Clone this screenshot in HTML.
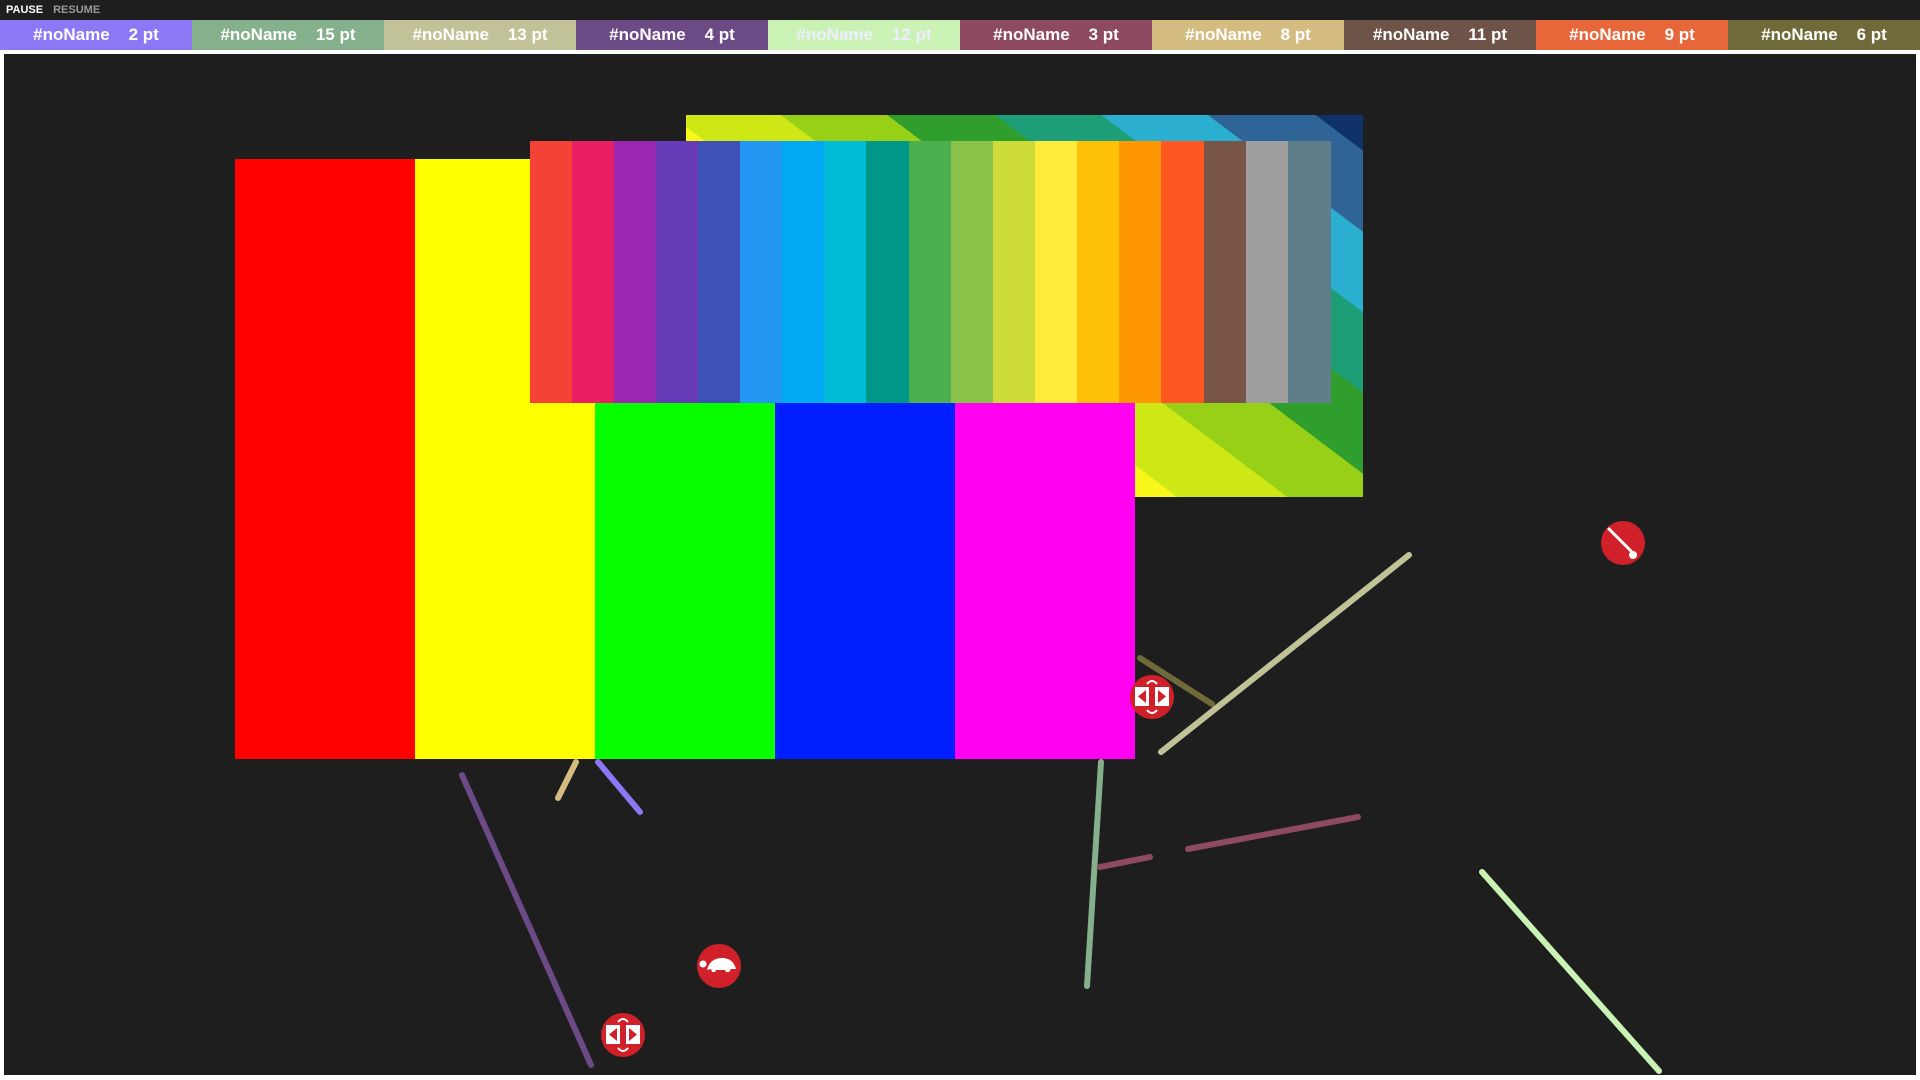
<!DOCTYPE html>
<html><head><meta charset="utf-8"><style>
*{margin:0;padding:0;box-sizing:border-box}
body{width:1920px;height:1080px;background:#fff;overflow:hidden;font-family:"Liberation Sans",sans-serif}
#top{position:absolute;left:0;top:0;width:1920px;height:20px;background:#1e1e1e;font-size:11px;font-weight:bold;line-height:20px;padding-left:6px}
#top span{margin-right:10px}
#tabs{position:absolute;left:0;top:20px;width:1920px;height:30px;display:flex}
#tabs div{flex:1;color:#fff;font-weight:bold;font-size:17px;line-height:30px;text-align:center;white-space:pre}
svg{position:absolute;left:0;top:0}
</style></head><body>
<div id="top"><span style="color:#fff">PAUSE</span><span style="color:#999">RESUME</span></div>
<div id="tabs">
<div style="background:#8c78f4">#noName    2 pt</div>
<div style="background:#85b08c">#noName    15 pt</div>
<div style="background:#c2c298">#noName    13 pt</div>
<div style="background:#6c4a86">#noName    4 pt</div>
<div style="background:#caf2b4;color:#eef">#noName    12 pt</div>
<div style="background:#8e4a60">#noName    3 pt</div>
<div style="background:#d4bc80">#noName    8 pt</div>
<div style="background:#6e5348">#noName    11 pt</div>
<div style="background:#e8673a">#noName    9 pt</div>
<div style="background:#6e6a3a">#noName    6 pt</div>
</div>
<svg width="1920" height="1080">
<defs>
<linearGradient id="dg" gradientUnits="userSpaceOnUse" x1="686" y1="497" x2="1115" y2="-72">
<stop offset="0" stop-color="#f9f71a"/><stop offset=".415" stop-color="#f9f71a"/>
<stop offset=".415" stop-color="#cde815"/><stop offset=".508" stop-color="#cde815"/>
<stop offset=".508" stop-color="#98d018"/><stop offset=".598" stop-color="#98d018"/>
<stop offset=".598" stop-color="#2f9e2c"/><stop offset=".689" stop-color="#2f9e2c"/>
<stop offset=".689" stop-color="#1e9e76"/><stop offset=".779" stop-color="#1e9e76"/>
<stop offset=".779" stop-color="#2aafd0"/><stop offset=".869" stop-color="#2aafd0"/>
<stop offset=".869" stop-color="#2e6496"/><stop offset=".96" stop-color="#2e6496"/>
<stop offset=".96" stop-color="#0f3368"/><stop offset="1" stop-color="#0f3368"/>
</linearGradient>
</defs>
<rect x="4" y="54" width="1912" height="1021" fill="#1e1e1e"/>
<rect x="686" y="115" width="677" height="382" fill="url(#dg)"/>
<rect x="235" y="159" width="180" height="600" fill="#ff0000"/>
<rect x="415" y="159" width="180" height="600" fill="#ffff00"/>
<rect x="595" y="159" width="180" height="600" fill="#08ff00"/>
<rect x="775" y="159" width="180" height="600" fill="#001eff"/>
<rect x="955" y="159" width="180" height="600" fill="#ff00f0"/>
<g>
<rect x="530" y="141" width="43" height="262" fill="#F44336"/>
<rect x="572" y="141" width="43" height="262" fill="#E91E63"/>
<rect x="614" y="141" width="43" height="262" fill="#9C27B0"/>
<rect x="656" y="141" width="43" height="262" fill="#673AB7"/>
<rect x="698" y="141" width="43" height="262" fill="#3F51B5"/>
<rect x="740" y="141" width="43" height="262" fill="#2196F3"/>
<rect x="782" y="141" width="43" height="262" fill="#03A9F4"/>
<rect x="824" y="141" width="43" height="262" fill="#00BCD4"/>
<rect x="866" y="141" width="43" height="262" fill="#009688"/>
<rect x="909" y="141" width="43" height="262" fill="#4CAF50"/>
<rect x="951" y="141" width="43" height="262" fill="#8BC34A"/>
<rect x="993" y="141" width="43" height="262" fill="#CDDC39"/>
<rect x="1035" y="141" width="43" height="262" fill="#FFEB3B"/>
<rect x="1077" y="141" width="43" height="262" fill="#FFC107"/>
<rect x="1119" y="141" width="43" height="262" fill="#FF9800"/>
<rect x="1161" y="141" width="43" height="262" fill="#FF5722"/>
<rect x="1204" y="141" width="43" height="262" fill="#795548"/>
<rect x="1246" y="141" width="43" height="262" fill="#9E9E9E"/>
<rect x="1288" y="141" width="43" height="262" fill="#607D8B"/>
</g>
<g stroke-linecap="round" stroke-width="6" fill="none">
<line x1="462" y1="775" x2="591" y2="1065" stroke="#6c4a86"/>
<line x1="576" y1="762" x2="558" y2="798" stroke="#d4bc80"/>
<line x1="598" y1="762" x2="640" y2="812" stroke="#8c78f4"/>
<line x1="1140" y1="658" x2="1212" y2="704" stroke="#6e6a3a"/>
<line x1="1161" y1="752" x2="1409" y2="555" stroke="#c2c298"/>
<line x1="1101" y1="762" x2="1087" y2="986" stroke="#85b08c"/>
<line x1="1100" y1="867" x2="1150" y2="857" stroke="#8e4a60"/>
<line x1="1188" y1="849" x2="1358" y2="817" stroke="#8e4a60"/>
<line x1="1482" y1="872" x2="1659" y2="1071" stroke="#caf2b4"/>
</g>
<g id="ar">
<circle cx="1152" cy="697" r="22" fill="#d0202a"/>
<rect x="1135" y="687" width="14" height="19" fill="#fff"/><rect x="1155" y="687" width="14" height="19" fill="#fff"/>
<path d="M1146 690 l-8 6.5 8 6.5z M1158 690 l8 6.5 -8 6.5z" fill="#d0202a"/>
<path d="M1147 684 q5 -6 10 0 M1147 710 q5 6 10 0" stroke="#fff" stroke-width="2" fill="none"/>
</g>
<use href="#ar" transform="translate(-529 338)"/>
<circle cx="1623" cy="543" r="22" fill="#d0202a"/>
<line x1="1609" y1="529" x2="1631" y2="551" stroke="#fff" stroke-width="3" stroke-linecap="round"/>
<circle cx="1633" cy="555" r="4" fill="#fff"/>
<circle cx="719" cy="966" r="22" fill="#d0202a"/>
<path d="M707 970 q3 -12 15 -12 q11 0 14 11 h-5 l-2 3 h-3 l-1 -2 h-9 l-1 2 h-3 l-1 -3z" fill="#fff"/>
<circle cx="703" cy="964" r="3.5" fill="#fff"/>
</svg>
</body></html>
